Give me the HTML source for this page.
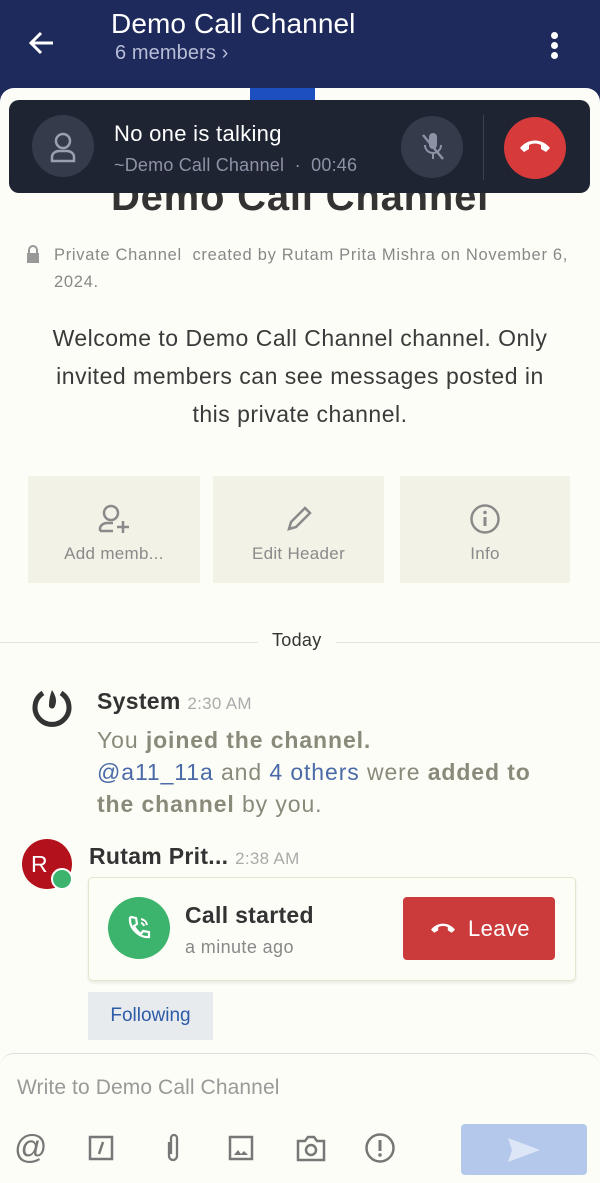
<!DOCTYPE html>
<html><head><meta charset="utf-8"><style>
*{margin:0;padding:0;box-sizing:border-box}
body{width:600px;height:1175px;overflow:hidden;background:#1e2a5c;font-family:"Liberation Sans",sans-serif;position:relative}
.abs{position:absolute}
.card{left:0;top:88px;width:600px;height:1087px;background:#fdfdf8;border-radius:14px 14px 0 0}
.btn{top:476px;height:107px;background:#f3f2e7;text-align:center;color:#8a8a8a;font-size:17px;letter-spacing:.3px}
</style></head><body>
<svg class="abs" style="left:27px;top:28px" width="30" height="30" viewBox="0 0 30 30"><path d="M26 15H5M14 5L4 15l10 10" stroke="#fff" stroke-width="3" fill="none"/></svg>
<div class="abs" style="left:111px;top:8px;color:#fff;font-size:28px;letter-spacing:.1px">Demo Call Channel</div>
<div class="abs" style="left:115px;top:42px;color:#b8bdd6;font-size:20px;letter-spacing:.1px">6 members ›</div>
<div class="abs" style="left:551px;top:32px;width:7px;height:7px;border-radius:50%;background:#fff;box-shadow:0 10px 0 #fff,0 20px 0 #fff"></div>
<div class="abs card"></div>
<div class="abs" style="left:250px;top:88px;width:65px;height:14px;background:#1d4fc0"></div>
<div class="abs" style="left:0;top:175px;width:600px;text-align:center;font-size:40px;font-weight:bold;color:#333;letter-spacing:.8px">Demo Call Channel</div>
<div class="abs" style="left:9px;top:100px;width:581px;height:93px;background:#1f2433;border-radius:10px"></div>
<div class="abs" style="left:32px;top:115px;width:62px;height:62px;border-radius:50%;background:#343b4b"></div>
<svg class="abs" style="left:48px;top:131px" width="30" height="32" viewBox="0 0 30 32"><circle cx="15" cy="10" r="7" stroke="#9aa0ae" stroke-width="2.5" fill="none"/><path d="M4 30v-4c0-4 4-6 7-6h8c3 0 7 2 7 6v4z" stroke="#9aa0ae" stroke-width="2.5" fill="none"/></svg>
<div class="abs" style="left:114px;top:121px;color:#fff;font-size:22px;letter-spacing:.3px">No one is talking</div>
<div class="abs" style="left:114px;top:155px;color:#8d92a5;font-size:18px;letter-spacing:.2px">~Demo Call Channel &nbsp;·&nbsp; 00:46</div>
<div class="abs" style="left:401px;top:116px;width:62px;height:62px;border-radius:50%;background:#343b4b"></div>
<svg class="abs" style="left:419px;top:131px" width="28" height="32" viewBox="0 0 28 32"><rect x="10" y="2" width="8" height="16" rx="4" fill="#8d92a5"/><path d="M6 14c0 5 4 8 8 8s8-3 8-8M14 22v6" stroke="#8d92a5" stroke-width="2" fill="none"/><path d="M4 4l20 24" stroke="#8d92a5" stroke-width="2.5"/></svg>
<div class="abs" style="top:115px;width:1px;height:65px;background:#3a4152;left:483px"></div>
<div class="abs" style="left:504px;top:117px;width:62px;height:62px;border-radius:50%;background:#d63a3a"></div>
<svg class="abs" style="left:518px;top:136px" width="34" height="20" viewBox="0 0 34 20"><path d="M2 12c8-10 22-10 30 0l-4 4-5-3v-4c-4-2-8-2-12 0v4l-5 3z" fill="#fff"/></svg>
<svg class="abs" style="left:26px;top:245px" width="14" height="18" viewBox="0 0 14 18"><path d="M3 8V5a4 4 0 0 1 8 0v3" stroke="#999" stroke-width="2" fill="none"/><rect x="1" y="8" width="12" height="10" fill="#999"/></svg>
<div class="abs" style="left:54px;top:242px;width:540px;color:#888;font-size:16.5px;line-height:27px;letter-spacing:.7px;white-space:nowrap">Private Channel &nbsp;created by Rutam Prita Mishra on November 6,<br>2024.</div>
<div class="abs" style="left:0;top:319px;width:600px;text-align:center;color:#3a3a3a;font-size:23px;line-height:38px;letter-spacing:.5px;white-space:nowrap">Welcome to Demo Call Channel channel. Only<br>invited members can see messages posted in<br>this private channel.</div>
<div class="abs btn" style="left:28px;width:172px"><svg style="margin-top:27px" width="34" height="32" viewBox="0 0 34 32"><circle cx="14" cy="10" r="7" stroke="#8a8a8a" stroke-width="2.5" fill="none"/><path d="M3 28v-2c0-4 4-6 7-6h6" stroke="#8a8a8a" stroke-width="2.5" fill="none"/><path d="M3 28h13M26 18v12M20 24h12" stroke="#8a8a8a" stroke-width="2.5"/></svg><div style="margin-top:4px">Add memb...</div></div>
<div class="abs btn" style="left:213px;width:171px"><svg style="margin-top:27px" width="32" height="32" viewBox="0 0 32 32"><path d="M6 26l2-7L22 5l5 5-14 14z" stroke="#8a8a8a" stroke-width="2.5" fill="none"/></svg><div style="margin-top:4px">Edit Header</div></div>
<div class="abs btn" style="left:400px;width:170px"><svg style="margin-top:27px" width="32" height="32" viewBox="0 0 32 32"><circle cx="16" cy="16" r="13.5" stroke="#8a8a8a" stroke-width="2.5" fill="none"/><path d="M16 14v9" stroke="#8a8a8a" stroke-width="3"/><circle cx="16" cy="9.5" r="1.8" fill="#8a8a8a"/></svg><div style="margin-top:4px">Info</div></div>
<div class="abs" style="left:0;top:642px;width:600px;height:1px;background:#e4e4dc"></div>
<div class="abs" style="left:258px;top:630px;padding:0 14px;background:#fdfdf8;color:#333;font-size:18px;letter-spacing:.3px">Today</div>
<svg class="abs" style="left:30px;top:686px" width="44" height="44" viewBox="0 0 44 44"><path d="M13 7A17 17 0 1 0 31 7" stroke="#333" stroke-width="5" fill="none"/><path d="M22 4c4 6 5 11 3 16a3 3 0 0 1-6-1c0-5 1-10 3-15z" fill="#333"/></svg>
<div class="abs" style="left:97px;top:688px;font-size:23px;color:#333;font-weight:bold;letter-spacing:.3px">System <span style="font-size:17px;color:#aaa;font-weight:normal">2:30 AM</span></div>
<div class="abs" style="left:97px;top:724px;width:500px;font-size:23px;line-height:32px;color:#8a8a7a;letter-spacing:.9px;white-space:nowrap">You <b>joined the channel.</b><br><span style="color:#4a6aa8">@a11_11a</span> and <span style="color:#4a6aa8">4 others</span> were <b>added to</b><br><b>the channel</b> by you.</div>
<div class="abs" style="left:22px;top:839px;width:50px;height:50px;border-radius:50%;background:#b3121d;color:#fff;font-size:23px;line-height:50px;padding-left:9px">R</div>
<div class="abs" style="left:51px;top:868px;width:22px;height:22px;border-radius:50%;background:#3db46d;border:2px solid #fff"></div>
<div class="abs" style="left:89px;top:843px;font-size:23px;color:#333;font-weight:bold;letter-spacing:.3px">Rutam Prit... <span style="font-size:17px;color:#aaa;font-weight:normal">2:38 AM</span></div>
<div class="abs" style="left:88px;top:877px;width:488px;height:104px;border:1px solid #e6e4cc;border-radius:5px;background:#fdfdf8;box-shadow:0 2px 3px rgba(0,0,0,.08)"></div>
<div class="abs" style="left:108px;top:897px;width:62px;height:62px;border-radius:50%;background:#3db46d"></div>
<svg class="abs" style="left:126px;top:914px" width="26" height="28" viewBox="0 0 26 28"><path d="M5 3l5 1 1 6-3 2c2 4 4 6 7 8l2-3 6 1 0 5c-10 1-20-9-19-19z" stroke="#fff" stroke-width="2.2" fill="none"/><path d="M15 5a8 8 0 0 1 6 6M15 9a4 4 0 0 1 3 3" stroke="#fff" stroke-width="2"/></svg>
<div class="abs" style="left:185px;top:902px;font-size:23px;font-weight:bold;color:#333;letter-spacing:.3px">Call started</div>
<div class="abs" style="left:185px;top:937px;font-size:18px;color:#888;letter-spacing:.4px">a minute ago</div>
<div class="abs" style="left:403px;top:897px;width:152px;height:63px;background:#cc3b3c;border-radius:4px;color:#fff;font-size:22px;line-height:63px;padding-left:65px;letter-spacing:.4px">Leave</div>
<svg class="abs" style="left:428px;top:920px" width="30" height="16" viewBox="0 0 34 20"><path d="M2 12c8-10 22-10 30 0l-4 4-5-3v-4c-4-2-8-2-12 0v4l-5 3z" fill="#fff"/></svg>
<div class="abs" style="left:88px;top:992px;width:125px;height:48px;background:#e7ebee;color:#2d5ba8;font-size:19px;line-height:48px;text-align:center">Following</div>
<div class="abs" style="left:0;top:1053px;width:600px;height:130px;border-top:1px solid #ddd;border-radius:14px 14px 0 0;background:#fdfdf8"></div>
<div class="abs" style="left:17px;top:1076px;font-size:21px;color:#999;letter-spacing:.1px">Write to Demo Call Channel</div>
<div class="abs" style="left:14px;top:1128px;font-size:33px;color:#777">@</div>
<svg class="abs" style="left:88px;top:1135px" width="26" height="26"><rect x="2" y="2" width="22" height="22" fill="none" stroke="#777" stroke-width="2.5"/><path d="M15 7l-4 12" stroke="#777" stroke-width="2.5"/></svg>
<svg class="abs" style="left:163px;top:1132px" width="20" height="32" viewBox="0 0 20 32"><path d="M6 10v14a4 4 0 0 0 8 0V6a3 3 0 0 0-6 0v16" stroke="#777" stroke-width="2.3" fill="none"/></svg>
<svg class="abs" style="left:228px;top:1135px" width="26" height="26"><rect x="2" y="2" width="22" height="22" fill="none" stroke="#777" stroke-width="2.5"/><path d="M6 20l4-5 3 4 3-3 4 4z" fill="#777"/></svg>
<svg class="abs" style="left:295px;top:1134px" width="32" height="28" viewBox="0 0 32 28"><path d="M3 7h7l3-4h6l3 4h7v19H3z" fill="none" stroke="#777" stroke-width="2.5"/><circle cx="16" cy="16" r="5" fill="none" stroke="#777" stroke-width="2.5"/></svg>
<svg class="abs" style="left:364px;top:1132px" width="32" height="32"><circle cx="16" cy="16" r="13.5" fill="none" stroke="#777" stroke-width="2.5"/><path d="M16 8v11" stroke="#777" stroke-width="3"/><circle cx="16" cy="23" r="1.8" fill="#777"/></svg>
<div class="abs" style="left:461px;top:1124px;width:126px;height:51px;background:#b4c8ec;border-radius:4px"></div>
<svg class="abs" style="left:506px;top:1136px" width="36" height="28" viewBox="0 0 36 28"><path d="M2 2l32 12L2 26l4-12z" fill="#dde6f7"/></svg>
</body></html>
